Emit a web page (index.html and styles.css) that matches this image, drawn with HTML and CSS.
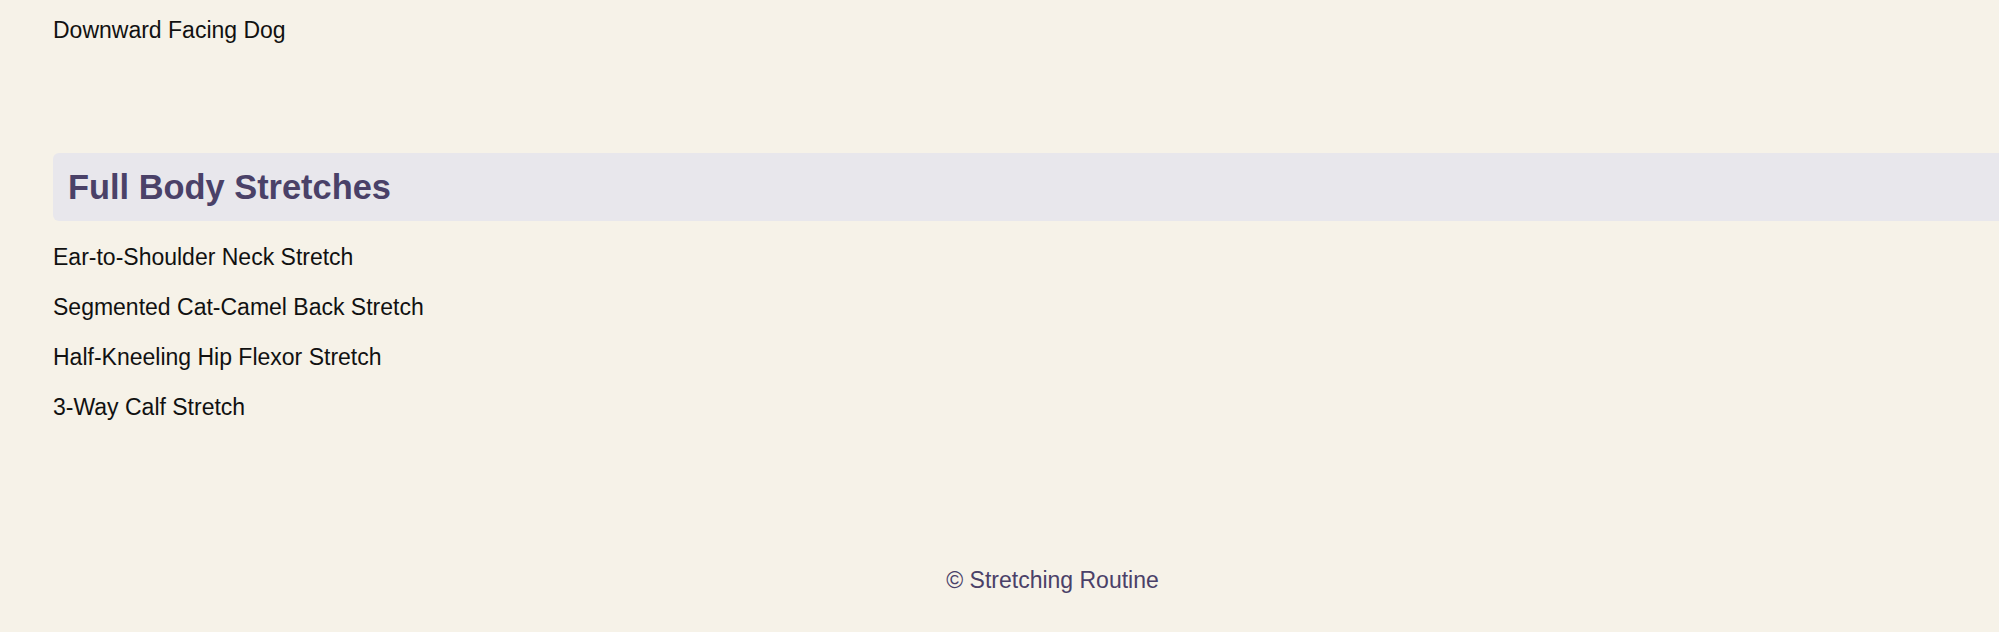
FILE: index.html
```html
<!DOCTYPE html>
<html lang="en">
<head>
<meta charset="utf-8">
<title>Stretching Routine</title>
<link rel="stylesheet" href="styles.css">
</head>
<body>
<div class="page">
  <section class="section">
    <ul class="list">
      <li>Downward Facing Dog</li>
    </ul>
  </section>
  <section class="section">
    <h2 class="section-title">Full Body Stretches</h2>
    <ul class="list">
      <li>Ear-to-Shoulder Neck Stretch</li>
      <li>Segmented Cat-Camel Back Stretch</li>
      <li>Half-Kneeling Hip Flexor Stretch</li>
      <li>3-Way Calf Stretch</li>
    </ul>
  </section>
  <footer class="footer">© Stretching Routine</footer>
</div>
</body>
</html>
```
FILE: styles.css
```css
html {
  overflow: hidden;
}
body {
  margin: 0;
  background: #f6f2e8;
  font-family: "Liberation Sans", Arial, sans-serif;
  color: #111;
}
.page {
  margin-left: 53px;
  width: 100%;
  padding-top: 17px;
}
.section {
  margin-bottom: 110px;
}
.section-title {
  margin: 0 0 23px;
  padding: 14px 15px;
  background: #e8e7ec;
  border-radius: 6px;
  color: #4a4168;
  font-size: 34.4px;
  line-height: 40px;
  font-weight: bold;
}
.list {
  list-style: none;
  margin: 0;
  padding: 0;
}
.list li {
  font-size: 23px;
  line-height: 26px;
  margin-bottom: 24px;
}
.footer {
  padding: 37px 0 40px;
  text-align: center;
  color: #4a4168;
  font-size: 23px;
  line-height: 26px;
}
```
